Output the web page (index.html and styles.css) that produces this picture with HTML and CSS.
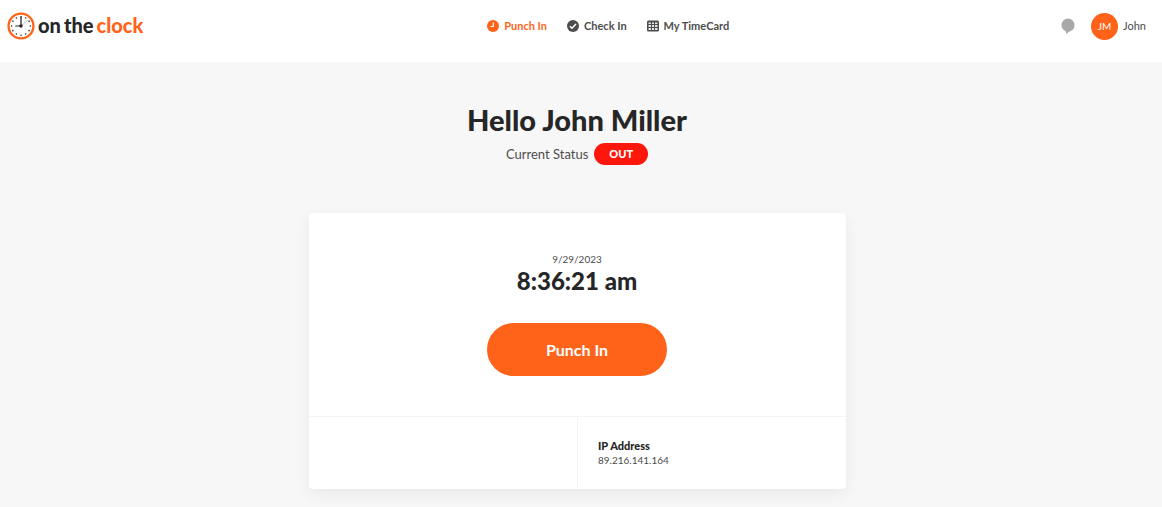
FILE: index.html
```html
<!DOCTYPE html>
<html lang="en">
    <head>
        <meta charset="UTF-8">
        <meta name="viewport" content="width=device-width, initial-scale=1.0">
        <title>OnTheClock</title>
        <link rel="stylesheet" href="styles.css">
    </head>
    <body>
        <header class="header">
            <a class="logo" href="#">
                <svg class="logo-icon" viewBox="0 0 54 54" aria-hidden="true">
                    <circle cx="27" cy="27" r="24" fill="#fff" stroke="#ff6319" stroke-width="4.500"/>
                    <circle cx="27" cy="27" r="18" fill="none" stroke="#262626" stroke-width="3" stroke-linecap="round" pathLength="120" stroke-dasharray="0 10"/>
                    <path d="M27 27 41 15" stroke="#999" stroke-width="1.2"/>
                    <path d="M27 9v18H16" fill="none" stroke="#262626" stroke-width="2.4"/>
                    <circle cx="27" cy="27" r="3.4" fill="#262626"/>
                </svg>
                <span class="logo-text">
                    <span>on</span>
                    <span>the</span>
                    <span class="accent">clock</span>
                </span>
            </a>
            <nav class="nav">
                <a class="nav-link active" href="#">
                    <svg class="nav-icon" viewBox="0 0 24 24" aria-hidden="true">
                        <circle cx="12" cy="12" r="12" fill="currentColor"/>
                        <path d="M12.5 5v8H7" fill="none" stroke="#fff" stroke-width="2.4"/>
                    </svg>
                    Punch In
                </a>
                <a class="nav-link" href="#">
                    <svg class="nav-icon" viewBox="0 0 24 24" aria-hidden="true">
                        <circle cx="12" cy="12" r="12" fill="currentColor"/>
                        <path d="M6 12.5l4 4 8-8.500" fill="none" stroke="#fff" stroke-width="3"/>
                    </svg>
                    Check In
                </a>
                <a class="nav-link" href="#">
                    <svg class="nav-icon" viewBox="0 0 24 24" aria-hidden="true">
                        <rect x="0" y="1" width="24" height="22" rx="3" fill="currentColor"/>
                        <path d="M3 5h5v3H3zM10 5h4v3h-4zM16 5h5v3h-5zM3 10h5v4H3zM10 10h4v4h-4zM16 10h5v4h-5zM3 16h5v4H3zM10 16h4v4h-4zM16 16h5v4h-5z" fill="#fff" opacity="0.85"/>
                    </svg>
                    My TimeCard
                </a>
            </nav>
            <div class="user">
                <button class="chat" type="button" aria-label="Messages">
                    <svg class="chat-icon" viewBox="0 0 28 32" aria-hidden="true">
                        <path d="M14 1a13 13 0 0 1 13 13c0 7-4 11-8 12-3 1-6 3-8 6l-2-6C4 24 1 20 1 14A13 13 0 0 1 14 1z" fill="#a8a8a8"/>
                    </svg>
                </button>
                <a class="profile" href="#">
                    <span class="avatar">JM</span>
                    John
                </a>
            </div>
        </header>

        <main class="main">
            <h1 class="greeting">Hello John Miller</h1>
            <div class="status">
                Current Status
                <span class="badge">OUT</span>
            </div>

            <section class="card">
                <div class="clock">
                    <div class="date">9/29/2023</div>
                    <div class="time">8:36:21 am</div>
                    <button class="punch" type="button">Punch In</button>
                </div>
                <div class="details">
                    <div class="detail"></div>
                    <div class="detail">
                        <div class="detail-title">IP Address</div>
                        <div class="detail-value">89.216.141.164</div>
                    </div>
                </div>
            </section>
        </main>
    </body>
</html>
```
FILE: styles.css
```css
* {
    margin: 0;
    padding: 0;
    box-sizing: border-box;
}

body {
    min-height: 100vh;
    background-color: #f7f7f7;
    color: #4d4d4d;
    font-family: Lato, "Liberation Sans", sans-serif;
    font-size: 11px;
    line-height: 16px;
}

a {
    color: inherit;
    text-decoration: none;
}

button {
    border: none;
    font-family: inherit;
    cursor: pointer;
}

/* header */
.header {
    display: flex;
    align-items: center;
    justify-content: space-between;
    padding: 12px 16px 22px 7px;
    background-color: #fff;
}

.logo {
    display: flex;
    align-items: center;
    gap: 3px;
}

.logo-icon {
    width: 28px;
    height: 28px;
}

.logo-text {
    display: flex;
    gap: 3px;
    color: #262626;
    font-size: 20px;
    font-weight: 900;
    line-height: 24px;
    padding-bottom: 2px;
}

.logo-text .accent {
    color: #ff6319;
}

.nav {
    display: flex;
    gap: 20px;
    padding-left: 12px;
}

.nav-link {
    display: flex;
    align-items: center;
    gap: 5px;
    font-weight: 700;
}

.nav-link.active {
    color: #ff6319;
}

.nav-icon {
    width: 12px;
    height: 12px;
}

.user {
    display: flex;
    align-items: center;
    gap: 16px;
}

.chat {
    background: none;
}

.chat-icon {
    display: block;
    width: 14px;
    height: 16px;
}

.profile {
    display: flex;
    align-items: center;
    gap: 5px;
}

.avatar {
    width: 27px;
    height: 27px;
    border-radius: 50%;
    background-color: #ff6319;
    color: #fff;
    font-size: 10px;
    line-height: 27px;
    text-align: center;
}

/* punch area */
.main {
    display: flex;
    flex-direction: column;
    align-items: center;
    padding: 40px 16px 18px 8px;
}

.greeting {
    color: #262626;
    font-size: 29px;
    font-weight: 900;
    line-height: 36px;
}

.status {
    display: flex;
    align-items: center;
    gap: 6px;
    margin-top: 5px;
    font-size: 13px;
}

.badge {
    padding: 0 15px;
    border-radius: 11px;
    background-color: #ff160c;
    color: #fff;
    font-size: 11px;
    font-weight: 900;
    line-height: 22px;
}

.card {
    width: 100%;
    max-width: 537px;
    margin-top: 48px;
    border-radius: 4px;
    background-color: #fff;
    box-shadow: 0 5px 16px rgba(0, 0, 0, 0.06);
}

.clock {
    display: flex;
    flex-direction: column;
    align-items: center;
    padding: 38px 16px 40px;
}

.date {
    font-size: 10px;
}

.time {
    color: #262626;
    font-size: 24px;
    font-weight: 900;
    line-height: 28px;
}

.punch {
    width: 180px;
    margin-top: 28px;
    border-radius: 27px;
    background-color: #ff6319;
    color: #fff;
    font-size: 16px;
    font-weight: 700;
    line-height: 53px;
}

.details {
    display: grid;
    grid-template-columns: 1fr 1fr;
    border-top: 1px solid #f4f4f4;
}

.detail {
    padding: 21px 20px;
    font-size: 11px;
    line-height: 15px;
}

.detail + .detail {
    border-left: 1px solid #f4f4f4;
}

.detail-title {
    color: #262626;
    font-weight: 900;
}

.detail-value {
    font-size: 10px;
}
```
